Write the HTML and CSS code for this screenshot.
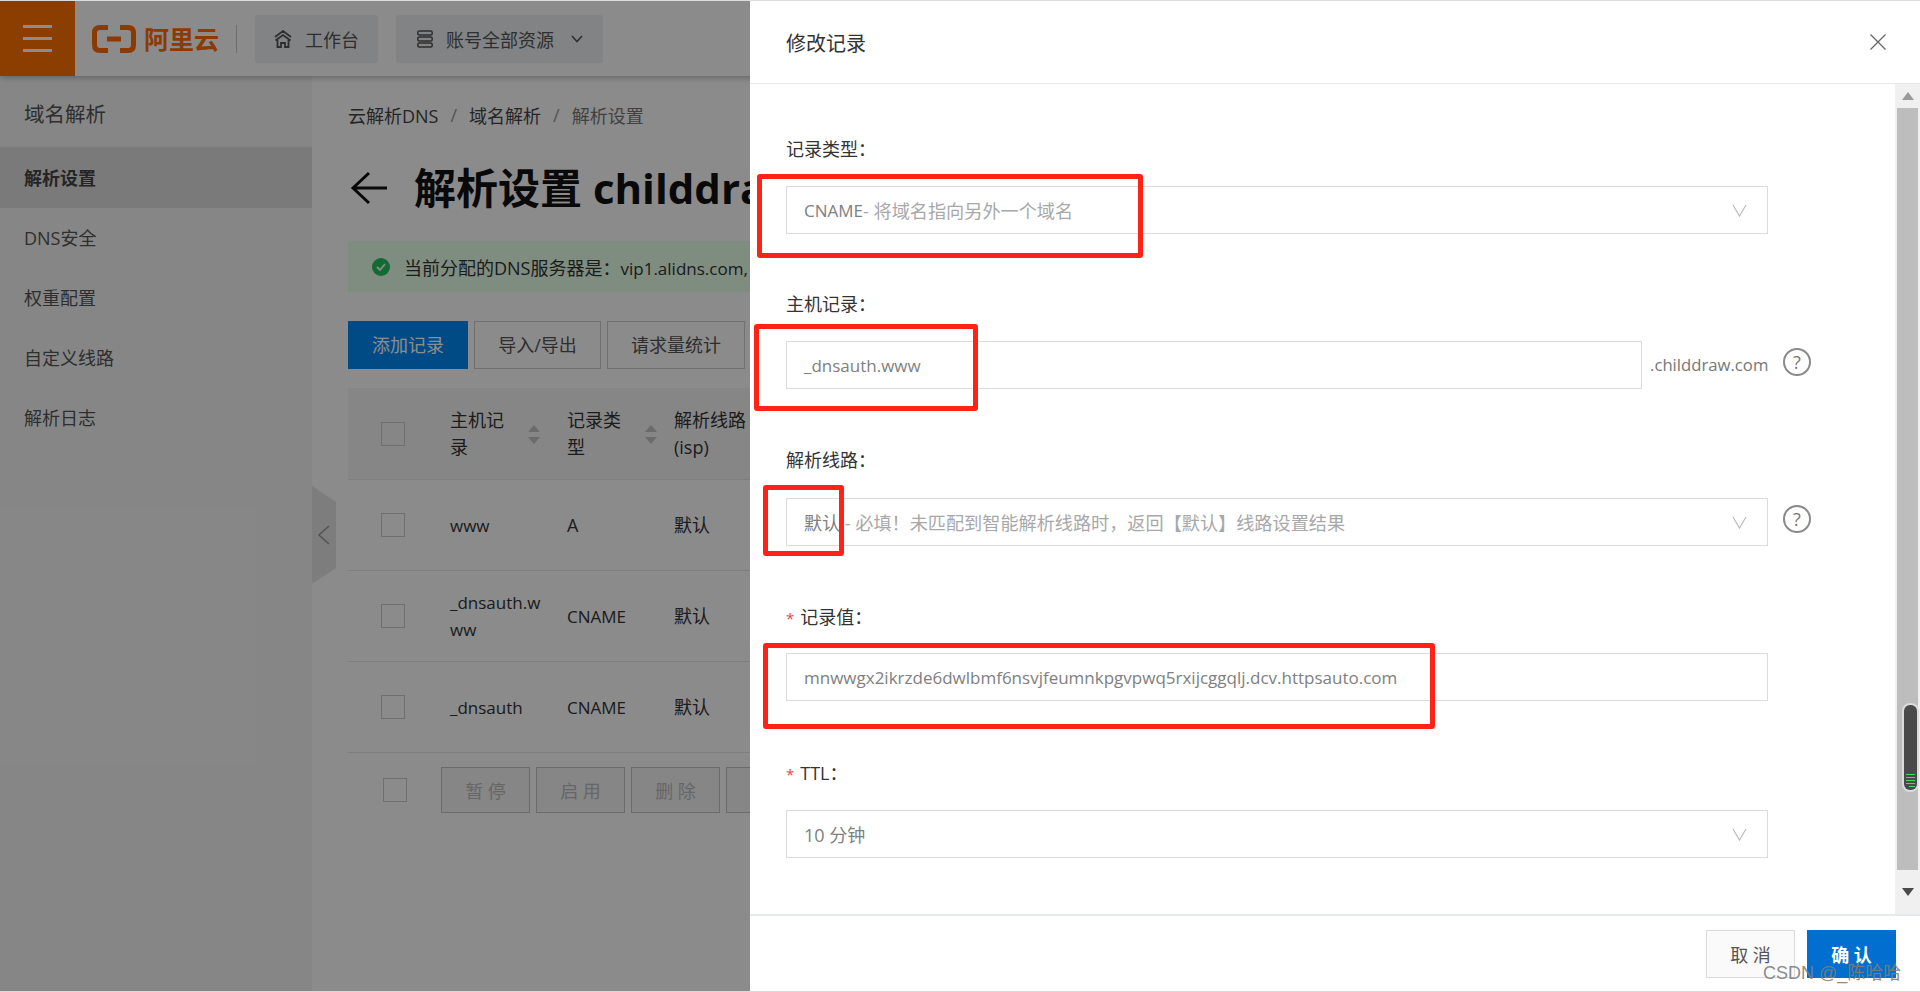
FILE: index.html
```html
<!DOCTYPE html>
<html lang="zh-CN">
<head>
<meta charset="utf-8">
<title>修改记录</title>
<link rel="stylesheet" href="styles.css">
</head>
<body>
<div class="strip-top"></div>
<div class="app">
  <header class="topbar">
    <div class="burger"><i></i><i></i><i></i></div>
    <div class="logo">
      <svg class="logo-mark" viewBox="0 0 44 28" width="44" height="28"><path d="M16 2.500H8Q2.500 2.500 2.500 8V20Q2.500 25.500 8 25.500H16M28 2.500H36Q41.500 2.500 41.500 8V20Q41.500 25.500 36 25.500H28M15 14H29" fill="none" stroke="#ff6a00" stroke-width="5"/></svg>
      <span class="logo-text">阿里云</span>
    </div>
    <div class="logo-div"></div>
    <div class="nav-btn nav-home">
      <svg viewBox="0 0 20 18" width="20" height="18"><path d="M2 7 10 1l8 6M2.500 10.500 10 5l7.500 5.500M4.500 10v7h3.500v-4h4v4h3.500v-7" fill="none" stroke="#555" stroke-width="1.800"/></svg>
      <span>工作台</span>
    </div>
    <div class="nav-btn nav-res">
      <svg viewBox="0 0 18 18" width="18" height="18"><rect x="1.800" y="1" width="14.400" height="4" rx="1.500" fill="none" stroke="#555" stroke-width="1.500"/><rect x="1.800" y="7" width="14.400" height="4" rx="1.500" fill="none" stroke="#555" stroke-width="1.500"/><rect x="1.800" y="13" width="14.400" height="4" rx="1.500" fill="none" stroke="#555" stroke-width="1.500"/></svg>
      <span>账号全部资源</span>
      <svg class="nav-chev" viewBox="0 0 12 8" width="12" height="8"><path d="M1 1l5 5.500L11 1" fill="none" stroke="#555" stroke-width="1.600"/></svg>
    </div>
  </header>
  <div class="main">
    <aside class="side">
      <div class="side-title">域名解析</div>
      <div class="side-item active">解析设置</div>
      <div class="side-item">DNS安全</div>
      <div class="side-item">权重配置</div>
      <div class="side-item">自定义线路</div>
      <div class="side-item">解析日志</div>
      <svg class="side-handle" viewBox="0 0 24 98" width="24" height="98"><path d="M0 0 24 16V82L0 98Z" fill="#e4e4e4"/><path d="M17 40 7 49 17 58" fill="none" stroke="#999" stroke-width="1.600"/></svg>
    </aside>
    <section class="content">
      <div class="crumbs"><span>云解析DNS</span><em>/</em><span>域名解析</span><em>/</em><span class="crumb-now">解析设置</span></div>
      <div class="title-row">
        <svg viewBox="0 0 38 34" width="38" height="34"><path d="M19 2 3 17l16 15M3 17h34" fill="none" stroke="#111" stroke-width="3"/></svg>
        <h1>解析设置 childdraw.com</h1>
      </div>
      <div class="alert">
        <svg viewBox="0 0 18 18" width="18" height="18"><circle cx="9" cy="9" r="9" fill="#23c25c"/><path d="M5 9l3 3 5-6" fill="none" stroke="#fff" stroke-width="1.800"/></svg>
        <span>当前分配的DNS服务器是：<span class="latin">vip1.alidns.com,</span></span>
      </div>
      <div class="actions">
        <div class="btn primary">添加记录</div>
        <div class="btn b2">导入/导出</div>
        <div class="btn b3">请求量统计</div>
      </div>
      <div class="tbl">
        <div class="tr th">
          <div class="td"><span class="cb"></span></div>
          <div class="td sortable"><span class="wrap-h">主机记录</span><svg class="sort" viewBox="0 0 12 20" width="12" height="20"><path d="M6 0l6 7H0zM0 12h12l-6 7z" fill="#c4c4c4"/></svg></div>
          <div class="td sortable"><span class="wrap-h">记录类型</span><svg class="sort" viewBox="0 0 12 20" width="12" height="20"><path d="M6 0l6 7H0zM0 12h12l-6 7z" fill="#c4c4c4"/></svg></div>
          <div class="td"><span>解析线路<br>(isp)</span></div>
        </div>
        <div class="tr">
          <div class="td"><span class="cb"></span></div><div class="td latin">www</div><div class="td">A</div><div class="td">默认</div>
        </div>
        <div class="tr">
          <div class="td"><span class="cb"></span></div><div class="td latin"><span class="wrap-v">_dnsauth.www</span></div><div class="td latin">CNAME</div><div class="td">默认</div>
        </div>
        <div class="tr">
          <div class="td"><span class="cb"></span></div><div class="td latin">_dnsauth</div><div class="td latin">CNAME</div><div class="td">默认</div>
        </div>
      </div>
      <div class="tfoot">
        <span class="cb"></span>
        <div class="fbtn">暂 停</div><div class="fbtn">启 用</div><div class="fbtn">删 除</div><div class="fbtn">更 多</div>
      </div>
    </section>
  </div>
  <div class="overlay"></div>
  <div class="drawer">
    <div class="d-head">
      <span>修改记录</span>
      <svg viewBox="0 0 18 18" width="18" height="18"><path d="M1.500 1.500l15 15M16.500 1.500l-15 15" fill="none" stroke="#666" stroke-width="1.300"/></svg>
    </div>
    <div class="d-body">
      <div class="form">
        <div class="label">记录类型：</div>
        <div class="row"><div class="ctl sel"><span class="val">CNAME</span><span class="ph">- 将域名指向另外一个域名</span><svg class="chev" viewBox="0 0 15 13" width="15" height="13"><path d="M1 1l6.500 11L14 1" fill="none" stroke="#bbb" stroke-width="1.200"/></svg></div></div>
        <div class="label">主机记录：</div>
        <div class="row"><div class="ctl short"><span class="val">_dnsauth.www</span></div><span class="suffix">.childdraw.com</span><span class="help">?</span></div>
        <div class="label tall">解析线路：</div>
        <div class="row"><div class="ctl sel"><span class="val cjk">默认</span><span class="ph"> - 必填！未匹配到智能解析线路时，返回【默认】线路设置结果</span><svg class="chev" viewBox="0 0 15 13" width="15" height="13"><path d="M1 1l6.500 11L14 1" fill="none" stroke="#bbb" stroke-width="1.200"/></svg></div><span class="help">?</span></div>
        <div class="label value"><b>*</b>记录值：</div>
        <div class="row"><div class="ctl"><span class="val">mnwwgx2ikrzde6dwlbmf6nsvjfeumnkpgvpwq5rxijcggqlj.dcv.httpsauto.com</span></div></div>
        <div class="label ttl"><b>*</b>TTL：</div>
        <div class="row"><div class="ctl sel"><span class="val cjk">10 分钟</span><svg class="chev" viewBox="0 0 15 13" width="15" height="13"><path d="M1 1l6.500 11L14 1" fill="none" stroke="#bbb" stroke-width="1.200"/></svg></div></div>
      </div>
      <div class="scroll">
        <div class="arrow"><svg viewBox="0 0 12 8" width="12" height="8"><path d="M6 0l6 8H0z" fill="#9a9a9a"/></svg></div>
        <div class="track">
          <div class="thumb"><i></i><i></i><i></i><i></i><i class="s"></i></div>
        </div>
        <div class="arrow down"><svg viewBox="0 0 12 8" width="12" height="8"><path d="M0 0h12L6 8z" fill="#4a4a4a"/></svg></div>
      </div>
    </div>
    <div class="d-foot">
      <div class="dbtn">取 消</div>
      <div class="dbtn ok">确 认</div>
    </div>
    <div class="mark m1"></div>
    <div class="mark m2"></div>
    <div class="mark m3"></div>
    <div class="mark m4"></div>
    <div class="wm">CSDN @_陈哈哈</div>
  </div>
</div>
<div class="strip-bottom"></div>
</body>
</html>
```
FILE: styles.css
```css
* { box-sizing: border-box; }
html, body { margin: 0; padding: 0; height: 992px; overflow: hidden; background: #fff; }
body { font-family: "Open Sans", "Noto Sans CJK SC", sans-serif; font-size: 18px; color: #333; }
svg { display: block; flex: none; }
.latin { font-size: 17px; }
.strip-top { height: 1px; background: #dcdcdc; }
.strip-bottom { height: 1px; background: #d9d9d9; }
.app { position: relative; height: 990px; overflow: hidden; background: #fdfdfd; }

.topbar { height: 75px; display: flex; align-items: center; background: #fdfdfd; box-shadow: 0 2px 6px rgba(0,0,0,.25); position: relative; z-index: 1; }
.burger { width: 75px; height: 75px; background: #ff6f00; display: flex; flex-direction: column; justify-content: center; gap: 9px; padding: 0 23px; }
.burger i { display: block; height: 3px; background: #fff; }
.logo { display: flex; align-items: center; margin-left: 17px; gap: 8px; }
.logo-text { font-size: 25px; font-weight: 700; color: #ff6a00; line-height: 28px; }
.logo-div { width: 1px; height: 28px; background: #c8c8c8; margin-left: 17px; }
.nav-btn { height: 48px; display: flex; align-items: center; background: #eceef1; border-radius: 3px; color: #555; }
.nav-home { width: 123px; margin-left: 18px; padding-left: 18px; gap: 12px; }
.nav-res { width: 207px; margin-left: 18px; padding-left: 20px; gap: 12px; }
.nav-chev { margin-left: 5px; }

.main { display: flex; height: 915px; }
.side { width: 312px; flex: none; background: #f5f5f5; position: relative; }
.side-title { height: 71px; padding: 24px 0 0 24px; font-size: 20.500px; line-height: 28px; color: #555; }
.side-item { height: 60px; padding-left: 24px; line-height: 60px; color: #555; }
.side-item.active { height: 61px; line-height: 63px; background: #dedede; font-weight: 600; color: #444; }
.side-handle { position: absolute; left: 100%; top: 410px; z-index: 1; }

.content { flex: none; width: 438px; padding: 27px 0 0 36px; background: #fdfdfd; overflow: hidden; }
.crumbs { display: flex; align-items: center; height: 24px; gap: 12px; color: #444; white-space: nowrap; }
.crumbs em { font-style: normal; color: #999; }
.crumb-now { color: #777; }
.title-row { margin-top: 37px; height: 48px; display: flex; align-items: center; gap: 26px; white-space: nowrap; }
.title-row svg { margin-left: 2px; }
h1 { margin: 0; min-width: 0; overflow: hidden; font-size: 42px; line-height: 48px; font-weight: 700; color: #111; }
.alert { margin-top: 29px; height: 51px; display: flex; align-items: center; padding-left: 24px; gap: 14px; background: #e8ffea; color: #333; white-space: nowrap; }
.actions { margin-top: 29px; display: flex; gap: 6px; }
.btn { height: 48px; display: flex; align-items: center; justify-content: center; border: 1px solid #cdcdcd; padding-bottom: 3px; color: #555; white-space: nowrap; }
.btn.primary { width: 120px; background: #0087f5; border-color: #0087f5; color: #fff; }
.b2 { width: 127px; }
.b3 { width: 138px; flex: none; }

.tbl { margin-top: 19px; }
.tr { height: 91px; display: grid; grid-template-columns: 102px 117px 107px 1fr; border-bottom: 1px solid #e6e6e6; }
.th { height: 92px; background: #f4f4f4; }
.td { display: flex; align-items: center; line-height: 27px; color: #333; }
.td:first-child { padding-left: 33px; }
.sortable { position: relative; }
.sort { position: absolute; left: 78px; top: 37px; }
.wrap-h { width: 56px; word-break: break-all; }
.wrap-v { width: 96px; word-break: break-all; }
.cb { display: block; flex: none; width: 24px; height: 24px; border: 1px solid #cacaca; }
.tfoot { margin-top: 14px; display: flex; align-items: center; padding-left: 35px; }
.tfoot .cb { margin-right: 34px; }
.fbtn { width: 89px; height: 46px; margin-right: 6px; flex: none; display: flex; align-items: center; justify-content: center; border: 1px solid #c4c4c4; background: #f4f4f4; color: #bbb; }

.overlay { position: absolute; inset: 0; background: rgba(0,0,0,.45); z-index: 2; }
.drawer { position: absolute; top: 0; right: 0; bottom: 0; width: 1170px; background: #fff; display: flex; flex-direction: column; z-index: 3; }
.d-head { height: 83px; flex: none; border-bottom: 1px solid #e8e8e8; display: flex; align-items: center; justify-content: space-between; padding: 0 33px 0 36px; font-size: 20px; color: #333; }
.d-body { height: 830px; flex: none; display: flex; justify-content: space-between; }
.form { padding: 54px 0 0 36px; width: 1100px; display: flex; flex-direction: column; }
.label { flex: none; height: 24px; line-height: 22px; margin-bottom: 24px; color: #333; }
.label.tall { margin-top: 1px; margin-bottom: 25px; }
.label.value { margin-top: 1px; margin-bottom: 23px; }
.label.ttl { margin-top: 2px; margin-bottom: 24px; }
.label b { color: #e5484d; font-weight: 400; font-size: 15px; margin-right: 6px; }
.row { flex: none; display: flex; height: 48px; margin-bottom: 59px; }
.ctl { width: 982px; height: 48px; flex: none; border: 1px solid #dcdcdc; display: flex; align-items: center; padding-left: 17px; font-size: 17px; white-space: pre; position: relative; }
.ctl.short { width: 856px; }
.val { color: #808080; }
.val.cjk { font-size: 18px; }
.ph { color: #a8a8a8; font-size: 18.150px; }
.chev { position: absolute; right: 20px; top: 17px; }
.suffix { width: 126px; flex: none; padding-left: 8px; line-height: 47px; font-size: 16.700px; color: #777; white-space: nowrap; }
.help { width: 28px; height: 28px; margin: 7px 0 0 15px; flex: none; border: 2px solid #8a8a8a; border-radius: 50%; display: flex; align-items: center; justify-content: center; font-size: 18px; color: #777; }
.scroll { width: 25px; flex: none; display: flex; flex-direction: column; background: #f0f0f0; padding-left: 1px; }
.arrow { height: 24px; flex: none; display: flex; align-items: center; justify-content: center; }
.arrow.down { height: 44px; }
.track { flex: 1; width: 21px; margin-left: 1px; background: #bdbdbd; position: relative; }
.thumb { position: absolute; left: 7px; top: 597px; width: 13px; height: 85px; background: #4a4a4a; border-radius: 6px; box-shadow: 0 0 0 2px #dcdcdc; display: flex; flex-direction: column; justify-content: flex-end; gap: 2px; padding: 0 2px 3px; }
.thumb i { display: block; height: 1px; background: #3ddc63; }
.thumb i.s { margin-left: 3px; }
.d-foot { height: 77px; flex: none; border-top: 2px solid #e6eaee; display: flex; justify-content: flex-end; gap: 12px; padding: 14px 24px 0 0; }
.dbtn { width: 89px; height: 48px; display: flex; align-items: center; justify-content: center; border: 1px solid #dcdcdc; background: #fafafa; color: #555; }
.dbtn.ok { background: #006fcf; border-color: #006fcf; color: #fff; font-weight: 600; }
.mark { position: absolute; border: 5px solid #ff2317; border-radius: 3px; }
.m1 { left: 7px; top: 173px; width: 386px; height: 84px; }
.m2 { left: 4px; top: 323px; width: 224px; height: 87px; }
.m3 { left: 13px; top: 484px; width: 81px; height: 71px; }
.m4 { left: 13px; top: 642px; width: 672px; height: 86px; }
.wm { position: absolute; left: 1013px; top: 960px; font-family: "Liberation Sans", "Noto Sans CJK SC", sans-serif; font-size: 18px; line-height: 24px; color: rgba(125,125,125,.9); white-space: nowrap; }
```
